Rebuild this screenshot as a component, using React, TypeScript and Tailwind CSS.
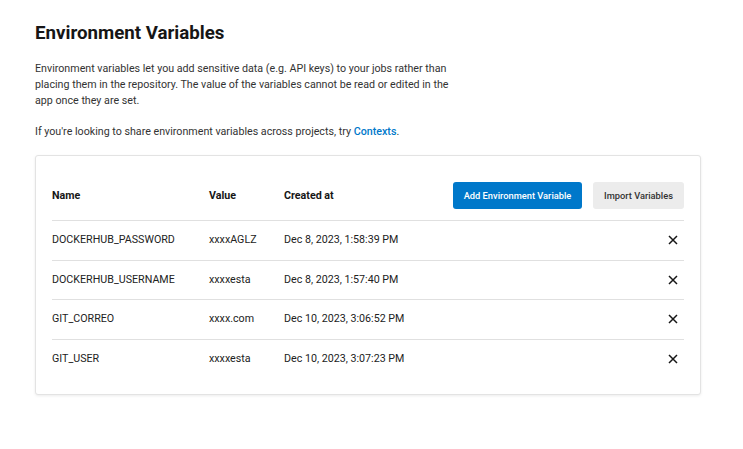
import React from 'react';

const rows = [
  { name: 'DOCKERHUB_PASSWORD', value: 'xxxxAGLZ', created: 'Dec 8, 2023, 1:58:39 PM' },
  { name: 'DOCKERHUB_USERNAME', value: 'xxxxesta', created: 'Dec 8, 2023, 1:57:40 PM' },
  { name: 'GIT_CORREO', value: 'xxxx.com', created: 'Dec 10, 2023, 3:06:52 PM' },
  { name: 'GIT_USER', value: 'xxxxesta', created: 'Dec 10, 2023, 3:07:23 PM' },
];

const CloseIcon = () => (
  <svg width="10" height="10" viewBox="0 0 10 10" fill="none" stroke="#161616" strokeWidth="1.5">
    <path d="M1 1 L9 9 M9 1 L1 9" />
  </svg>
);

const App: React.FC = () => {
  return (
    <div className="min-h-screen bg-white font-['Roboto',sans-serif] text-[#161616]">
      <div className="pl-[35px] pr-[42px] pt-[21px]">
        <h1 className="text-[18.7px] font-bold leading-[24px]">Environment Variables</h1>
        <p className="mt-[16px] w-[420px] text-[10.7px] leading-[16px] text-[#333]">
          Environment variables let you add sensitive data (e.g. API keys) to your jobs rather than placing them in the
          repository. The value of the variables cannot be read or edited in the app once they are set.
        </p>
        <p className="mt-[15px] text-[10.7px] leading-[16px] text-[#333]">
          If you're looking to share environment variables across projects, try{' '}
          <span className="font-medium text-[#0078ca]">Contexts</span>.
        </p>

        <div className="mt-[15px] w-[666px] rounded-[3px] border border-[#e3e3e3] bg-white px-[16px] pt-[26px] pb-[15px] shadow-[0_1px_3px_rgba(0,0,0,0.08)]">
          <div className="flex h-[39px] items-center border-b border-[#e0e0e0] pb-[11px] text-[10.7px] font-bold">
            <div className="w-[157px] pt-[1px]">Name</div>
            <div className="w-[75px] pt-[1px]">Value</div>
            <div className="flex-1 pt-[1px]">Created at</div>
            <button className="h-[27px] w-[129px] rounded-[3px] bg-[#0078ca] text-[9.3px] font-medium text-white">
              Add Environment Variable
            </button>
            <button className="ml-[11px] h-[27px] w-[91px] rounded-[3px] bg-[#ececec] text-[9.3px] font-medium text-[#333]">
              Import Variables
            </button>
          </div>
          {rows.map((r, i) => (
            <div
              key={r.name}
              className={`flex h-[39.5px] items-center text-[10.7px] text-[#222] ${i < rows.length - 1 ? 'border-b border-[#e0e0e0]' : ''}`}
            >
              <div className="w-[157px]">{r.name}</div>
              <div className="w-[75px]">{r.value}</div>
              <div className="flex-1">{r.created}</div>
              <div className="pr-[6px]">
                <CloseIcon />
              </div>
            </div>
          ))}
        </div>
      </div>
    </div>
  );
};

export default App;
